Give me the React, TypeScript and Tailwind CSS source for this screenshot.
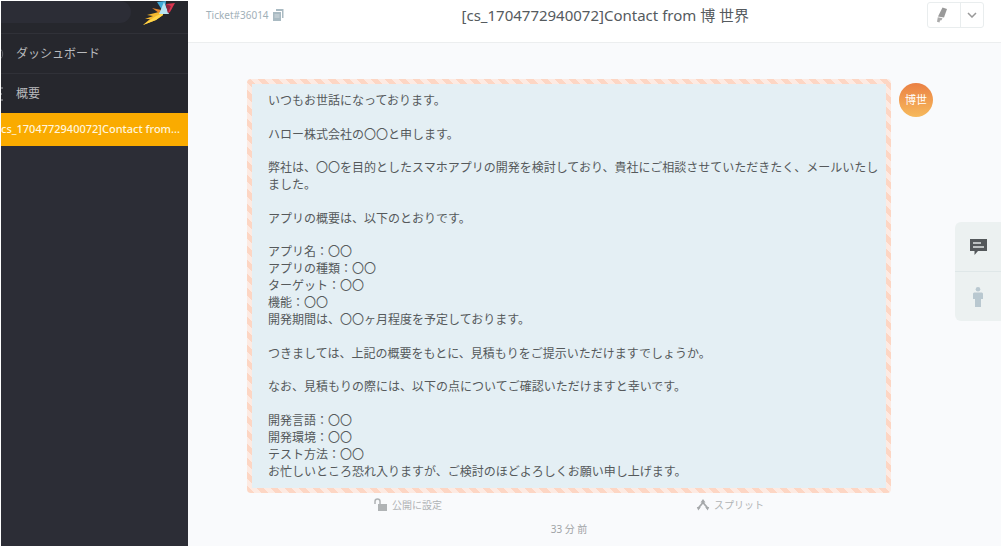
import React from "react";

const paragraphs: string[][] = [
  ["いつもお世話になっております。"],
  ["ハロー株式会社の〇〇と申します。"],
  ["弊社は、〇〇を目的としたスマホアプリの開発を検討しており、貴社にご相談させていただきたく、メールいたしました。"],
  ["アプリの概要は、以下のとおりです。"],
  ["アプリ名：〇〇", "アプリの種類：〇〇", "ターゲット：〇〇", "機能：〇〇", "開発期間は、〇〇ヶ月程度を予定しております。"],
  ["つきましては、上記の概要をもとに、見積もりをご提示いただけますでしょうか。"],
  ["なお、見積もりの際には、以下の点についてご確認いただけますと幸いです。"],
  ["開発言語：〇〇", "開発環境：〇〇", "テスト方法：〇〇", "お忙しいところ恐れ入りますが、ご検討のほどよろしくお願い申し上げます。"],
];

function Logo() {
  return (
    <svg viewBox="0 0 34 25" className="h-[25px] w-[34px]" aria-hidden="true">
      <path d="M1 24 8 18 3 18 11 15 5 14 13 12 20 10 21 14 14 19Z" fill="#f5b82e" />
      <path d="M1 24 14 15 21 12 21 14 14 19Z" fill="#ffd54a" />
      <path d="M10 7 19 9 17 12Z" fill="#e8872b" />
      <path d="M15 1 24 0 23 8 20 9Z" fill="#3fa9d8" />
      <path d="M22 1 27 13 17 13Z" fill="#b8e3f2" />
      <path d="M24 3 33 2 28 11 26 12Z" fill="#d9364f" />
      <path d="M24 3 29 5 26 12Z" fill="#8f2340" />
    </svg>
  );
}

function Sidebar() {
  return (
    <aside className="w-[187px] shrink-0 overflow-hidden bg-[#2c2d36]">
      <div className="flex h-8 items-start justify-between bg-[#26272d] pr-3">
        <input type="search" aria-label="検索" className="h-[22px] w-[130px] rounded-r-full bg-[#2c2d36] text-xs text-gray-300 outline-none" />
        <Logo />
      </div>
      <nav className="text-xs text-[#b9babd]">
        <a href="#dashboard" className="flex h-10 items-center gap-3 border-t border-[#303138] bg-[#26272d]">
          <svg viewBox="0 0 3 12" className="h-3 w-[3px]" aria-hidden="true">
            <path d="M0 1.5Q1.700 3 1.700 6T0 10.500" fill="none" stroke="#66676c" />
          </svg>
          ダッシュボード
        </a>
        <a href="#overviews" className="flex h-10 items-center gap-3 border-t border-[#303138] bg-[#26272d]">
          <svg viewBox="0 0 3 16" className="h-4 w-[3px]" aria-hidden="true">
            <path d="M0 2h2M0 8h1M0 14h2" stroke="#66676c" strokeWidth="2" />
          </svg>
          概要
        </a>
        <a href="#ticket" className="flex h-[33px] items-center whitespace-nowrap bg-[#faab00] text-[11px] font-medium text-[#fff5dc]">
          cs_1704772940072]Contact from...
        </a>
      </nav>
    </aside>
  );
}

function Header() {
  return (
    <header className="grid h-[42px] shrink-0 grid-cols-[auto_1fr_auto] items-start border-b border-[#eceeef] bg-white pl-[18px] pr-[17px]">
      <div className="flex h-7 items-center gap-1 text-[10px] text-[#9fb0b8]">
        Ticket#36014
        <button type="button" aria-label="コピー">
          <svg viewBox="0 0 11 12" className="h-3 w-[11px]" aria-hidden="true">
            <path d="M3 0h7.500v9H9V2H3Z" fill="#a9bac2" />
            <path d="M0 3h8v9H0Z" fill="#a9bac2" />
            <path d="M1.500 6h5M1.500 8h5" stroke="#dfe6e9" strokeWidth=".8" />
          </svg>
        </button>
      </div>
      <h1 className="h-7 whitespace-pre text-center text-[15px] leading-7 text-[#555a5e]">[cs_1704772940072]Contact from 博 世界</h1>
      <div className="mt-px flex h-[26px] rounded-[3px] border border-[#e9edee] bg-white">
        <button type="button" aria-label="ハイライト" className="flex w-8 items-center justify-center pr-1">
          <svg viewBox="0 0 12 16" className="h-4 w-3" aria-hidden="true">
            <path d="M6.500.5 11 2 8 10.500 2 9.500Z" fill="#999" />
            <path d="m1.800 10.300 4.700 1-1 2L4 13.500 3.500 15.500 1 14.800Z" fill="#aaa" />
          </svg>
        </button>
        <button type="button" aria-label="メニュー" className="flex w-[23px] items-center justify-center border-l border-[#e9edee]">
          <svg viewBox="0 0 10 6" className="h-[6px] w-[10px]" aria-hidden="true">
            <path d="m1 1 4 4 4-4" fill="none" stroke="#999" strokeWidth="1.500" />
          </svg>
        </button>
      </div>
    </header>
  );
}

function Article() {
  return (
    <article>
      <div className="flex items-start gap-2">
        <div className="min-w-0 flex-1 rounded-[4px] bg-[repeating-linear-gradient(45deg,#fdd6c4_0_5px,#fdeae2_5px_10px)] p-[5px]">
          <div className="flex min-h-[404px] flex-col justify-between bg-[#e4eff4] py-2 pl-4 pr-1 text-xs leading-[17px] text-[#55595b]">
            {paragraphs.map((lines) => (
              <div key={lines[0]}>
                {lines.map((line) => (
                  <p key={line}>{line}</p>
                ))}
              </div>
            ))}
          </div>
        </div>
        <div className="mt-1 flex size-[34px] items-center justify-center rounded-full bg-linear-to-b from-[#ea8044] to-[#f6b95c] text-[11px] text-white">博世</div>
      </div>
      <div className="mr-[42px] grid grid-cols-2 text-[10px] text-[#b0b3b5]">
        <button type="button" className="flex h-6 items-center justify-center gap-1">
          <svg viewBox="0 0 14 14" className="size-[14px]" aria-hidden="true">
            <path d="M1 6V3.500a2.500 2.500 0 0 1 5 0V6" fill="none" stroke="#b0b3b5" strokeWidth="1.500" />
            <path d="M4 6h9v7H4Z" fill="#b0b3b5" />
          </svg>
          公開に設定
        </button>
        <button type="button" className="flex h-6 items-center justify-center gap-1">
          <svg viewBox="0 0 14 14" className="size-[14px]" aria-hidden="true">
            <path d="M7 3Q6.500 6 4.500 7.500T2.500 11M7 3Q7.500 6 9.500 7.500T11.500 11" fill="none" stroke="#a5a8aa" strokeWidth="1.600" />
            <path d="m7 1 2.500 3.500h-5ZM.8 9h4L2.300 12.500ZM9.200 9h4l-1.500 3.500Z" fill="#a5a8aa" />
          </svg>
          スプリット
        </button>
      </div>
      <p className="mr-[42px] h-6 pt-1 text-center text-[10px] leading-4 text-[#a0a3a6]">33 分 前</p>
    </article>
  );
}

function SideTabs() {
  return (
    <div className="mt-[179px] w-[46px] shrink-0 self-start overflow-hidden rounded-l-md bg-[#ecf1f1]">
      <button type="button" aria-label="チケット" className="flex h-[50px] w-full items-center justify-center border-b border-[#dfe7e8]">
        <svg viewBox="0 0 17 17" className="size-[17px]" aria-hidden="true">
          <path d="M0 1h17v12H8l-3.500 4V13H0Z" fill="#54585b" />
          <path d="M3 5h8M3 9h11" stroke="#dfe4e5" strokeWidth="1.500" />
        </svg>
      </button>
      <button type="button" aria-label="顧客" className="flex h-[49px] w-full items-center justify-center">
        <svg viewBox="0 0 10 20" className="h-5 w-[10px]" aria-hidden="true">
          <circle cx="5" cy="2.300" r="2.300" fill="#b9c8d0" />
          <path d="M1 5.500h8l1 1V12H8v8H2v-8H0V6.500Z" fill="#b9c8d0" />
        </svg>
      </button>
    </div>
  );
}

export default function App() {
  return (
    <div className="flex min-h-screen bg-white pb-[2px] pl-px pr-px pt-px font-['Noto_Sans','Noto_Sans_CJK_JP',sans-serif]">
      <Sidebar />
      <div className="flex min-w-0 flex-1 flex-col bg-[#f9fafc]">
        <Header />
        <main className="flex flex-1">
          <div className="min-w-0 flex-1 pl-[59px] pr-[22px] pt-9">
            <Article />
          </div>
          <SideTabs />
        </main>
      </div>
    </div>
  );
}
